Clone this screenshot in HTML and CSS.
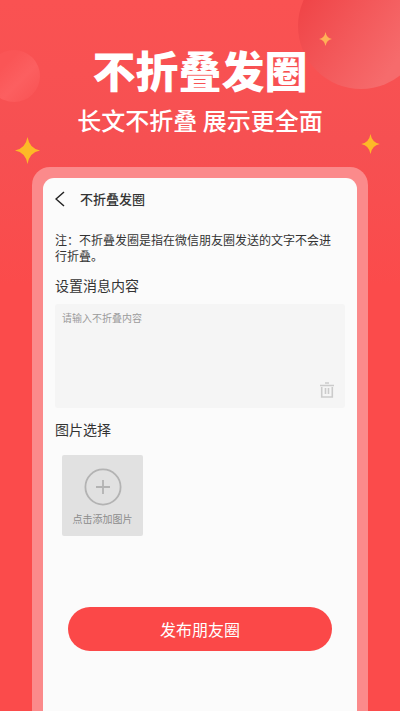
FILE: index.html
```html
<!DOCTYPE html>
<html lang="zh-CN">

<head>
    <meta charset="UTF-8">
    <meta name="viewport" content="width=device-width, initial-scale=1">
    <title>不折叠发圈</title>
    <link rel="stylesheet" href="styles.css">
</head>

<body>
    <!-- 背景装饰 -->
    <div class="decor">
        <svg class="circle-left" viewBox="0 0 40 52">
            <defs>
                <linearGradient id="fade-left" x1="0" y1="0" x2="1" y2="1">
                    <stop offset="0.3" stop-color="#fa5556"/>
                    <stop offset="0.6" stop-color="#fc5f60"/>
                    <stop offset="1" stop-color="#f85152"/>
                </linearGradient>
            </defs>
            <circle cx="14" cy="26" r="26" fill="url(#fade-left)"/>
        </svg>
        <svg class="circle-right" viewBox="0 0 102 89">
            <defs>
                <linearGradient id="fade-right" x1="0" y1="0.200" x2="1" y2="0.900">
                    <stop offset="0" stop-color="#ef4144"/>
                    <stop offset="0.8" stop-color="#f66b6c"/>
                </linearGradient>
            </defs>
            <circle cx="63" cy="26" r="63" fill="url(#fade-right)"/>
        </svg>
        <svg class="star star-left" viewBox="0 0 26 28"><path d="M13 0Q15 12 26 14Q15 16 13 28Q11 16 0 14Q11 12 13 0Z"/></svg>
        <svg class="star star-top" viewBox="0 0 26 28"><path d="M13 0Q15 12 26 14Q15 16 13 28Q11 16 0 14Q11 12 13 0Z"/></svg>
        <svg class="star star-right" viewBox="0 0 26 28"><path d="M13 0Q15 12 26 14Q15 16 13 28Q11 16 0 14Q11 12 13 0Z"/></svg>
    </div>

    <header class="banner">
        <h1>不折叠发圈</h1>
        <p>长文不折叠 展示更全面</p>
    </header>

    <main class="phone">
        <div class="screen">
            <div class="nav">
                <button type="button" class="back" aria-label="返回">
                    <svg width="10" height="16" viewBox="0 0 10 16"><path d="M9 1L1 8L9 15"/></svg>
                </button>
                <h2>不折叠发圈</h2>
            </div>
            <form>
                <p class="note">注：不折叠发圈是指在微信朋友圈发送的文字不会进行折叠。</p>

                <label class="section-title" for="content">设置消息内容</label>
                <div class="message">
                    <textarea id="content" name="content" placeholder="请输入不折叠内容"></textarea>
                    <button type="button" class="clear" aria-label="清空">
                        <svg width="14" height="16" viewBox="0 0 14 16">
                            <path d="M0 3.500H14M5 1H9M1.700 5V15H12.300V5M5.500 6V12M8.500 6V12"/>
                        </svg>
                    </button>
                </div>

                <h3 class="section-title">图片选择</h3>
                <button type="button" class="add-image">
                    <svg width="38" height="38" viewBox="0 0 38 38">
                        <circle cx="19" cy="19" r="17.600"/>
                        <path d="M12 19H26M19 12V26"/>
                    </svg>
                    <span>点击添加图片</span>
                </button>

                <button type="submit" class="submit">发布朋友圈</button>
            </form>
        </div>
    </main>
</body>

</html>
```
FILE: styles.css
```css
* {
    box-sizing: border-box;
}

body {
    position: relative;
    display: flex;
    flex-direction: column;
    min-height: 100vh;
    margin: 0;
    background: linear-gradient(#fa5252, #f65052 20%, #fb4b4b 40%, #fb4b4b);
    color: #333;
    font-family: "Noto Sans CJK SC", sans-serif;
}

h1,
h2,
h3,
p {
    margin: 0;
}

button {
    padding: 0;
    border: 0;
    background: none;
    font-family: inherit;
    cursor: pointer;
}

svg {
    display: block;
    fill: none;
}

/* 背景圆形和星星 */
.decor svg {
    position: absolute;
}

.circle-left {
    top: 50px;
    left: 0;
    width: 40px;
    height: 52px;
}

.circle-right {
    top: 0;
    right: 0;
    width: 102px;
    height: 89px;
}

.star {
    fill: #fdb927;
}

.star-left {
    top: 137px;
    left: 15px;
    width: 25px;
    height: 27px;
}

.star-top {
    top: 32px;
    right: 68px;
    width: 13px;
    height: 14px;
    fill: #ffb057;
}

.star-right {
    top: 134px;
    right: 20px;
    width: 19px;
    height: 20px;
}

/* 顶部标题 */
.banner {
    position: relative;
    padding-top: 41px;
    color: #fff;
    text-align: center;
}

.banner h1 {
    font-size: 43px;
    font-weight: 900;
    line-height: 56px;
}

.banner p {
    margin: 6px 0 30px;
    font-size: 24px;
    font-weight: 500;
    line-height: 34px;
}

/* 手机外框 */
.phone {
    position: relative;
    display: flex;
    flex: 1;
    margin: 0 32px;
    padding: 11px 11px 0;
    border-radius: 18px 18px 0 0;
    background: #fb8a8b;
}

.screen {
    flex: 1;
    padding: 0 12px 24px;
    border-radius: 11px 11px 0 0;
    background: #fbfbfb;
}

.nav {
    display: flex;
    align-items: center;
    gap: 15px;
    height: 41px;
}

.nav h2 {
    font-size: 13px;
    font-weight: 500;
}

.back svg {
    stroke: #222;
    stroke-width: 1.5px;
}

form {
    display: flex;
    flex-direction: column;
}

.note {
    padding: 13px 8px 11px 0;
    font-size: 12px;
    line-height: 16px;
}

.section-title {
    font-size: 14px;
    font-weight: 400;
    line-height: 20px;
}

.message {
    position: relative;
    margin: 9px 0 11px;
}

.message textarea {
    display: block;
    width: 100%;
    height: 104px;
    padding: 6px 7px;
    border: 0;
    border-radius: 3px;
    background: #f5f5f5;
    font-family: inherit;
    font-size: 10px;
    line-height: 16px;
    resize: none;
}

.message textarea::placeholder {
    color: #9b9b9b;
}

.clear {
    position: absolute;
    right: 11px;
    bottom: 10px;
}

.clear svg {
    stroke: #cbcbcb;
    stroke-width: 1.6px;
}

.add-image {
    display: flex;
    flex-direction: column;
    align-items: center;
    gap: 6px;
    width: 81px;
    height: 81px;
    margin: 16px 7px 0;
    padding-top: 13px;
    border-radius: 2px;
    background: #e1e1e1;
    color: #8c8c8c;
    font-size: 10px;
    line-height: 14px;
}

.add-image svg {
    stroke: #b3b3b3;
    stroke-width: 1.8px;
}

.submit {
    height: 44px;
    margin: 71px 13px 0;
    border-radius: 22px;
    background: #fb4848;
    color: #fff;
    font-size: 16px;
}
```
